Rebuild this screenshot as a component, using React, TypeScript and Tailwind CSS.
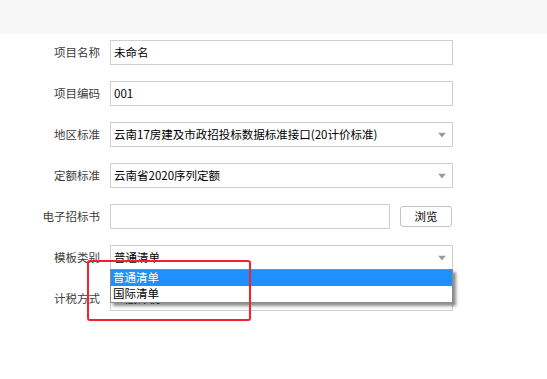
const font = "font-['Noto_Sans_CJK_SC','Noto_Sans',sans-serif]"

function Arrow() {
    return (
        <svg className="absolute right-[6px] top-1/2 -translate-y-1/2" width="8" height="5" viewBox="0 0 8 5">
            <polygon points="0,0 8,0 4,5" fill="#9a9a9a" />
        </svg>
    )
}

function Row({ label, children }: { label: string; children: React.ReactNode }) {
    return (
        <div className="flex h-[25px] items-center gap-[10px]">
            <div className="w-[100px] text-right text-[11.5px] leading-none text-[#3c3c3c]">{label}</div>
            {children}
        </div>
    )
}

function Field({ value, select }: { value?: string; select?: boolean }) {
    return (
        <div className="relative flex h-[25px] w-[343px] items-center border border-[#cfcfcf] bg-white px-[3px] text-[11.5px] leading-none text-black">
            {value}
            {select && <Arrow />}
        </div>
    )
}

export default function App() {
    return (
        <div className={`relative min-h-[379px] w-[547px] bg-white ${font}`}>
            <div className="h-[34px] bg-[#f7f7f7]" />
            <div className="flex flex-col gap-[16px] pt-[6px]">
                <Row label="项目名称">
                    <Field value="未命名" />
                </Row>
                <Row label="项目编码">
                    <Field value="001" />
                </Row>
                <Row label="地区标准">
                    <Field value="云南17房建及市政招投标数据标准接口(20计价标准)" select />
                </Row>
                <Row label="定额标准">
                    <Field value="云南省2020序列定额" select />
                </Row>
                <Row label="电子招标书">
                    <div className="h-[25px] w-[280px] border border-[#cfcfcf] bg-white" />
                    <button className="h-[21px] w-[52px] rounded-[3px] border border-[#c4c4c4] bg-white text-[11.5px] leading-none text-black">
                        浏览
                    </button>
                </Row>
                <Row label="模板类别">
                    <div className="relative">
                        <Field value="普通清单" select />
                        <div className="absolute left-0 top-[24px] z-10 w-[343px] border border-[#8a8a8a] bg-white text-[11.5px] leading-none shadow-[3px_3px_3px_rgba(0,0,0,0.45)]">
                            <div className="flex h-[16px] items-center bg-[#1e90ff] px-[2px] text-white">普通清单</div>
                            <div className="flex h-[16px] items-center px-[2px] text-black">国际清单</div>
                        </div>
                    </div>
                </Row>
                <Row label="计税方式">
                    <Field value="一般计税" select />
                </Row>
            </div>
            <div className="absolute left-[87px] top-[260px] z-20 h-[61px] w-[164px] rounded-[3px] border-2 border-[#f5222d]" />
        </div>
    )
}
